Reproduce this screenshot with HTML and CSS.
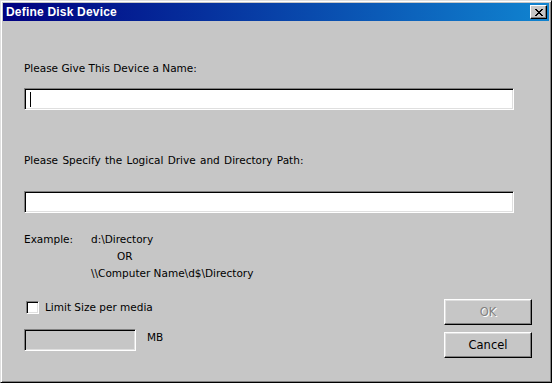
FILE: index.html
```html
<!DOCTYPE html>
<html>
<head>
<meta name="viewport" content="width=device-width, initial-scale=1">
<link rel="stylesheet" href="styles.css">
</head>
<body>
<div class="window">
  <div class="titlebar">
    <span class="title">Define Disk Device</span>
    <span class="closebtn">
      <svg width="8" height="7" viewBox="0 0 8 7"><path d="M0 0h2v1h1v1h2V1h1V0h2v1H7v1H6v1H5v1h1v1h1v1h1v1H6V6H5V5H3v1H2v1H0V6h1V5h1V4h1V3H2V2H1V1H0z" fill="#000"/></svg>
    </span>
  </div>

  <div class="content">
    <div class="label first">Please Give This Device a Name:</div>
    <div class="field wide"><span class="caret"></span></div>

    <div class="label second">Please Specify the Logical Drive and Directory Path:</div>
    <div class="field wide"></div>

    <div class="example">
      <span>Example:</span><span>d:\Directory</span>
      <span></span><span class="ex-or">OR</span>
      <span></span><span>\\Computer Name\d$\Directory</span>
    </div>

    <div class="bottom">
      <div class="left-col">
        <div class="check-row"><span class="checkbox"></span><span>Limit Size per media</span></div>
        <div class="size-row"><div class="field small"></div><span class="unit">MB</span></div>
      </div>
      <div class="right-col">
        <div class="btn disabled">OK</div>
        <div class="btn">Cancel</div>
      </div>
    </div>
  </div>
</div>
</body>
</html>
```

FILE: styles.css
```css
* {
  box-sizing: border-box;
}

body {
  margin: 0;
  background: #c6c6c6;
  font: 10.5px "DejaVu Sans", "Liberation Sans", sans-serif;
  color: #000;
}

.window {
  width: 552px;
  height: 383px;
  background: #c6c6c6;
  border: 1px solid;
  border-color: #dfdfdf #000 #000 #dfdfdf;
  box-shadow: inset 1px 1px #fff, inset -1px -1px #808080;
  padding: 2px;
}

.titlebar {
  height: 18px;
  background: linear-gradient(to right, #000080, #1084d0);
  display: flex;
  align-items: center;
  justify-content: space-between;
  padding: 0 2px 0 3px;
}

.title {
  color: #fff;
  font: bold 12px "Liberation Sans", Arial, sans-serif;
  letter-spacing: 0.2px;
}

.closebtn {
  width: 17px;
  height: 14px;
  background: #c6c6c6;
  border: 1px solid;
  border-color: #fff #000 #000 #fff;
  box-shadow: inset -1px -1px #808080;
  display: flex;
  align-items: center;
  justify-content: center;
}

.content {
  padding: 0 17px 0 21px;
}

.label {
  height: 13px;
  line-height: 13px;
}

.label.first {
  margin-top: 41px;
}

.label.second {
  margin-top: 44px;
  word-spacing: 1px;
}

.field {
  height: 22px;
  background: #fff;
  border: 1px solid;
  border-color: #808080 #fff #fff #808080;
  box-shadow: inset 1px 1px #000, inset -1px -1px #dfdfdf;
  position: relative;
}

.field.wide {
  width: 490px;
  margin-top: 13px;
}

.label.second + .field.wide {
  margin-top: 24px;
}

.caret {
  position: absolute;
  left: 5px;
  top: 3px;
  width: 1px;
  height: 15px;
  background: #000;
}

.example {
  margin-top: 18px;
  display: grid;
  grid-template-columns: 67px 1fr;
  grid-auto-rows: 17px;
  line-height: 17px;
}

.ex-or {
  padding-left: 26px;
}

.bottom {
  margin-top: 17px;
  display: flex;
  justify-content: space-between;
}

.check-row {
  display: flex;
  align-items: center;
  height: 14px;
  margin-top: 1px;
}

.checkbox {
  flex: none;
  width: 13px;
  height: 13px;
  margin: 0 6px 0 2px;
  background: #fff;
  border: 1px solid;
  border-color: #808080 #fff #fff #808080;
  box-shadow: inset 1px 1px #000, inset -1px -1px #dfdfdf;
}

.size-row {
  display: flex;
  align-items: center;
  margin-top: 15px;
}

.field.small {
  width: 112px;
  background: #c6c6c6;
}

.unit {
  margin-left: 11px;
  margin-top: -6px;
}

.right-col {
  display: flex;
  flex-direction: column;
  gap: 7px;
}

.btn {
  width: 88px;
  height: 26px;
  line-height: 24px;
  text-align: center;
  font-size: 11.5px;
  border: 1px solid;
  border-color: #fff #000 #000 #fff;
  box-shadow: inset -1px -1px #808080, inset 1px 1px #dfdfdf;
}

.btn.disabled {
  color: #808080;
  text-shadow: 1px 1px #fff;
}
```
